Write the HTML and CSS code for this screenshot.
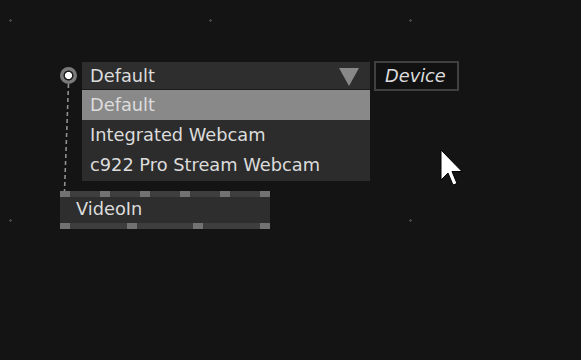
FILE: index.html
```html
<!DOCTYPE html>
<html lang="en">
<head>
    <meta charset="UTF-8">
    <meta name="viewport" content="width=device-width, initial-scale=1.0">
    <title>Patch - VideoIn</title>
    <link rel="stylesheet" href="styles.css">
</head>
<body>
    <div class="canvas">
        <!-- connection from the device selector to the node -->
        <svg class="wire" width="581" height="360">
            <line x1="68.5" y1="84" x2="64.5" y2="191"></line>
        </svg>

        <div class="widget">
            <span class="port"></span>
            <div class="dropdown">
                <div class="dropdown-head">
                    <span>Default</span>
                    <span class="arrow"></span>
                </div>
                <ul class="dropdown-menu">
                    <li class="selected">Default</li>
                    <li>Integrated Webcam</li>
                    <li>c922 Pro Stream Webcam</li>
                </ul>
            </div>
            <div class="label">Device</div>
        </div>

        <div class="node">
            <div class="ports">
                <span></span><span></span><span></span><span></span><span></span><span></span>
            </div>
            <div class="node-title">VideoIn</div>
            <div class="ports">
                <span></span><span></span><span></span><span></span>
            </div>
        </div>

        <svg class="cursor" width="24" height="38" viewBox="0 0 24 38">
            <path d="M1 1 L1 31 L8 24 L13 36 L17 34.5 L12 22.5 L22 22.5 Z"></path>
        </svg>
    </div>
</body>
</html>
```

FILE: styles.css
```css
body {
    margin: 0;
    background-color: #141414;
    font-family: "DejaVu Sans", sans-serif;
    color: #dcdcdc;
}

.canvas {
    position: relative;
    width: 581px;
    height: 360px;
    overflow: hidden;
    background-image: radial-gradient(circle at 10.5px 20.5px, #4a4a4a 0 1px, transparent 1.4px);
    background-size: 200px 200px;
}

.wire {
    position: absolute;
    left: 0;
    top: 0;
}

.wire line {
    stroke: #909090;
    stroke-width: 1.6;
    stroke-dasharray: 4 3;
}

/* device selector */
.widget {
    position: absolute;
    left: 60px;
    top: 61px;
    display: flex;
    align-items: flex-start;
}

.port {
    width: 17px;
    height: 17px;
    margin-top: 6px;
    margin-right: 5px;
    border-radius: 50%;
    background: radial-gradient(circle, #ffffff 0 3.3px, #1e1e1e 3.8px 4.8px, #7a7a7a 5.3px);
}

.dropdown {
    width: 288px;
    margin-top: 1px;
    margin-right: 4px;
    font-size: 17.8px;
}

.dropdown-head {
    display: flex;
    align-items: center;
    justify-content: space-between;
    height: 27px;
    padding: 0 11px 0 8px;
    background-color: #2e2e2e;
    border-bottom: 1px solid #1c1c1c;
}

.arrow {
    width: 0;
    height: 0;
    border-left: 10px solid transparent;
    border-right: 10px solid transparent;
    border-top: 18px solid #888888;
    margin-top: 2px;
}

.dropdown-menu {
    list-style: none;
    margin: 0;
    padding: 0 0 1px;
    background-color: #2c2c2c;
}

.dropdown-menu li {
    height: 30px;
    line-height: 30px;
    padding-left: 8px;
}

.dropdown-menu .selected {
    background-color: #898989;
}

.label {
    box-sizing: border-box;
    width: 85px;
    height: 30px;
    line-height: 25px;
    padding-left: 9px;
    border: 2px solid #404040;
    background-color: #111111;
    font-size: 17.8px;
    font-style: italic;
}

/* VideoIn node */
.node {
    position: absolute;
    left: 60px;
    top: 191px;
    width: 210px;
    background-color: #2e2e2e;
}

.ports {
    display: flex;
    justify-content: space-between;
    height: 6px;
    background-color: #3e3e3e;
}

.ports span {
    width: 10px;
    background-color: #727272;
}

.node-title {
    height: 26px;
    line-height: 24px;
    padding-left: 16px;
    font-size: 17.8px;
}

.cursor {
    position: absolute;
    left: 440px;
    top: 149px;
}

.cursor path {
    fill: #ffffff;
    stroke: #000000;
    stroke-width: 1;
    stroke-linejoin: miter;
}
```
